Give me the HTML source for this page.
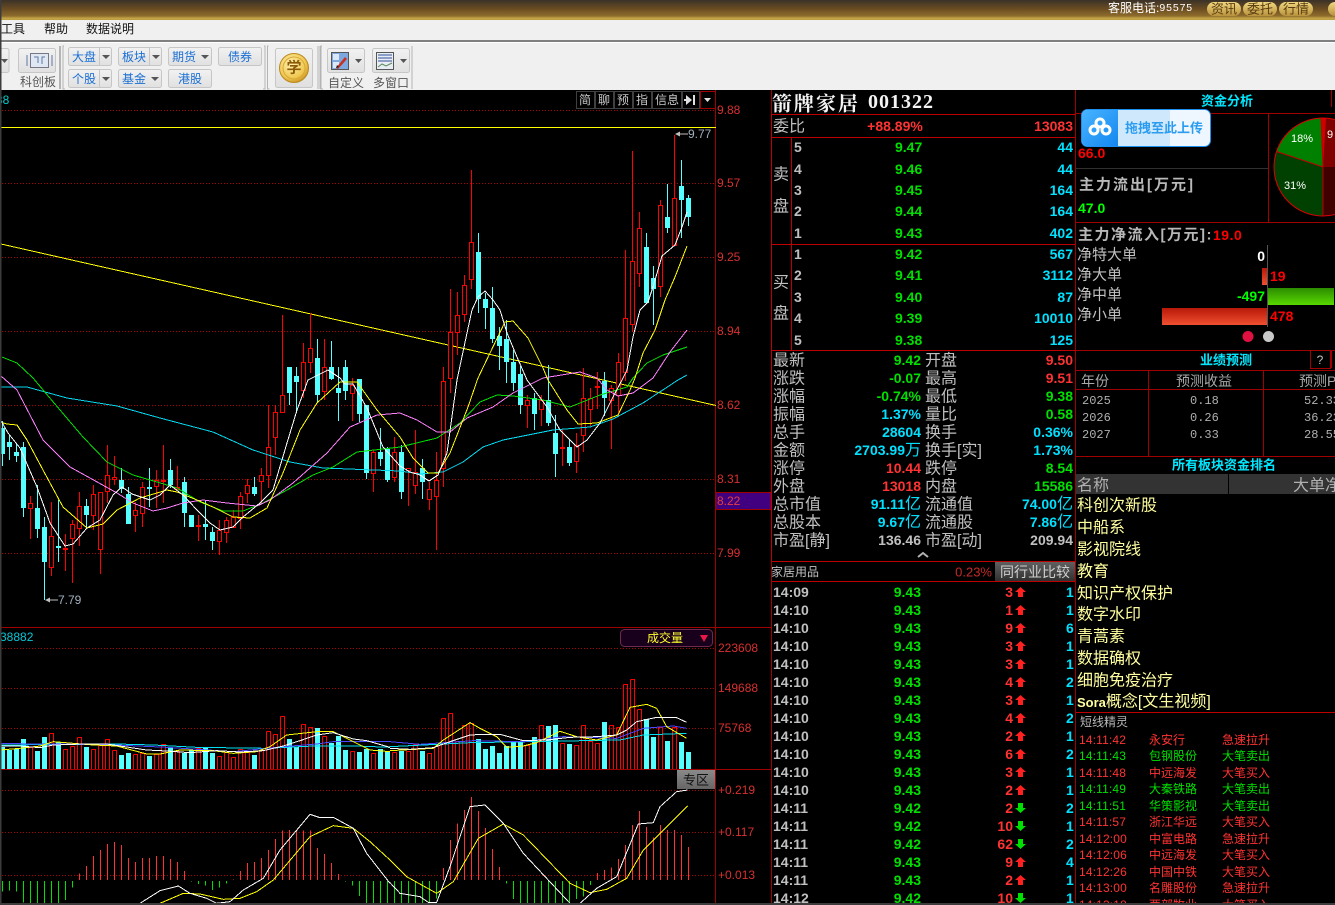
<!DOCTYPE html>
<html><head><meta charset="utf-8"><style>
html,body{margin:0;padding:0;background:#000;width:1335px;height:905px;overflow:hidden}
svg{display:block;position:absolute;left:0;top:0}
text{font-family:"Liberation Sans","WenQuanYi Zen Hei","Noto Sans CJK SC",sans-serif;dominant-baseline:central;white-space:pre}
.l{font-size:16px;fill:#c0c0c0;transform:translateY(1px)}
.f{font-size:15px}
.n{font-size:14px;font-weight:bold}
.a{font-size:12px;fill:#d83030}
.m{font-size:12px}
.e{text-anchor:end}
.ct{text-anchor:middle}
.r{fill:#ff3333}.g{fill:#00e000}.c{fill:#00e0ff}.w{fill:#c0c0c0}.y{fill:#ffffa0}
.cj{font-size:16px;font-weight:normal}
.h{font-size:13px;font-weight:bold;fill:#00e8ff;text-anchor:middle}
.b{font-size:12px;fill:#1a6fd4;text-anchor:middle}
.k{font-size:12px;fill:#555;text-anchor:middle}
.mo{font-family:"Liberation Mono",monospace;font-size:12px;fill:#b0b0b0;transform:translateY(1px)}
.t{font-size:12px;letter-spacing:.15px}
.ln{fill:none;stroke-width:1;shape-rendering:crispEdges}
.ns{vector-effect:non-scaling-stroke;fill:none;stroke-width:1;shape-rendering:crispEdges}
</style></head><body>
<svg width="1335" height="905" viewBox="0 0 1335 905" xmlns="http://www.w3.org/2000/svg">
<defs>
<linearGradient id="ban" x1="0" y1="0" x2="0" y2="1"><stop offset="0" stop-color="#3a3228"/><stop offset=".45" stop-color="#6a4c22"/><stop offset=".8" stop-color="#8e6c2c"/><stop offset=".92" stop-color="#c8a848"/><stop offset="1" stop-color="#b89a40"/></linearGradient>
<linearGradient id="pill" x1="0" y1="0" x2="0" y2="1"><stop offset="0" stop-color="#f0d880"/><stop offset="1" stop-color="#b8923c"/></linearGradient>
<linearGradient id="bt" x1="0" y1="0" x2="0" y2="1"><stop offset="0" stop-color="#f2f2f2"/><stop offset="1" stop-color="#e0e0e0"/></linearGradient>
<linearGradient id="rb" x1="0" y1="0" x2="0" y2="1"><stop offset="0" stop-color="#b81808"/><stop offset="1" stop-color="#f05030"/></linearGradient>
<linearGradient id="gb" x1="0" y1="0" x2="0" y2="1"><stop offset="0" stop-color="#2c8c00"/><stop offset="1" stop-color="#58d800"/></linearGradient>
<linearGradient id="gr" x1="0" y1="0" x2="0" y2="1"><stop offset="0" stop-color="#606060"/><stop offset="1" stop-color="#303030"/></linearGradient>
<linearGradient id="zq" x1="0" y1="0" x2="0" y2="1"><stop offset="0" stop-color="#8a8a8a"/><stop offset="1" stop-color="#666"/></linearGradient>
<radialGradient id="coin" cx=".4" cy=".35" r=".7"><stop offset="0" stop-color="#fff0b0"/><stop offset=".7" stop-color="#f0c850"/><stop offset="1" stop-color="#c89020"/></radialGradient>
<linearGradient id="blu" x1="0" y1="0" x2="1" y2="1"><stop offset="0" stop-color="#48b4ff"/><stop offset="1" stop-color="#1486f0"/></linearGradient>
<path id="u" d="M1020.5 587l5.5 5h-3v5h-5v-5h-3z" fill="#ff2020"/>
<path id="d" d="M1020.5 597l5.5-5h-3v-5h-5v5h-3z" fill="#00e000"/>
</defs>

<!-- top chrome -->
<rect width="1335" height="90" fill="#f0f0f0"/>
<rect width="1335" height="20" fill="url(#ban)"/>
<rect y="40" width="1335" height="2" fill="#808080"/>
<rect y="42" width="1335" height="1" fill="#fff"/>
<text x="1108" y="8" style="font-size:12px;fill:#fff">客服电话:<tspan style="font-size:10.5px;letter-spacing:.9px">95575</tspan></text>
<g fill="url(#pill)"><rect x="1207" y="2" width="34" height="14" rx="7"/><rect x="1243" y="2" width="34" height="14" rx="7"/><rect x="1279" y="2" width="34" height="14" rx="7"/><rect x="1328" y="2" width="20" height="14" rx="7"/></g>
<g style="font-size:13px;fill:#5a3c10;text-anchor:middle"><text x="1224" y="9">资讯</text><text x="1260" y="9">委托</text><text x="1296" y="9">行情</text></g>
<g style="font-size:12px;fill:#111"><text x="1" y="29">工具</text><text x="44" y="29">帮助</text><text x="86" y="29">数据说明</text></g>

<!-- toolbar -->
<g fill="url(#bt)" stroke="#c6c6c6">
<rect x="-6" y="48.5" width="15" height="24" rx="2"/><rect x="18.5" y="48.5" width="37" height="24" rx="2"/>
<rect x="68.5" y="47.5" width="43" height="18" rx="2"/><rect x="118.5" y="47.5" width="43" height="18" rx="2"/><rect x="168.5" y="47.5" width="43" height="18" rx="2"/><rect x="218.5" y="47.5" width="43" height="18" rx="2"/>
<rect x="68.5" y="69.5" width="43" height="18" rx="2"/><rect x="118.5" y="69.5" width="43" height="18" rx="2"/><rect x="168.5" y="69.5" width="43" height="18" rx="2"/>
<rect x="275.5" y="48.5" width="37" height="39" rx="2"/>
<rect x="327.5" y="48.5" width="37" height="24" rx="2"/><rect x="372.5" y="48.5" width="37" height="24" rx="2"/>
</g>
<path d="M99.5 48V65M149.5 48V65M99.5 70V87" stroke="#c6c6c6"/>
<g fill="#555"><path d="M1 59h7l-3.500 4zM102 55h8l-4 4zM152 55h8l-4 4zM201 55h8l-4 4zM102 77h8l-4 4zM151 77h8l-4 4zM355 59h7l-3.500 4zM400 59h7l-3.500 4z"/></g>
<g><text class="b" x="84" y="57">大盘</text><text class="b" x="134" y="57">板块</text><text class="b" x="184" y="57">期货</text><text class="b" x="240" y="57">债券</text><text class="b" x="84" y="79">个股</text><text class="b" x="134" y="79">基金</text><text class="b" x="190" y="79">港股</text></g>
<g stroke="#b4b4b4" fill="none"><path d="M59.500 46V89M60.500 46V89M64 46h-1V89h2M264 46h1V89h-2M268.500 46h-1V89h2M318 46V89M320 46V89M322 46h-1V89h2M412 46V89"/></g>
<!-- chip icon -->
<rect x="30.500" y="53.500" width="18" height="14" fill="#dfe7f2" stroke="#778"/>
<path d="M34 57h4v6M45 57h-3v7M27 55v11M52 55v11" stroke="#5a78a8" fill="none"/>
<text class="k" x="38" y="82">科创板</text>
<!-- coin -->
<circle cx="294" cy="68" r="14.500" fill="url(#coin)" stroke="#b88a20"/>
<circle cx="294" cy="68" r="11" fill="none" stroke="#d8a838"/>
<text x="294" y="68" style="font-size:15px;font-weight:bold;fill:#8a5a08;text-anchor:middle">学</text>
<!-- custom icons -->
<rect x="331.500" y="52.500" width="17" height="17" fill="#7ea8e0" stroke="#555"/>
<rect x="333" y="54" width="6" height="6" fill="#dde8f6"/><rect x="333" y="62" width="6" height="6" fill="#dde8f6"/>
<path d="M336 68l9-11 2 2-9 10z" fill="#c83020"/><path d="M336 68l1-3 2 2z" fill="#222"/>
<rect x="376.500" y="52.500" width="17" height="17" fill="#e8ecf4" stroke="#555"/>
<path d="M378 55h14M378 58h14M378 61h14" stroke="#30509a"/><path d="M378 67l4-3 4 2 6-3" stroke="#5a8a5a" fill="none"/>
<text class="k" x="346" y="83">自定义</text><text class="k" x="391" y="83">多窗口</text>

<!-- main black -->
<rect y="90" width="1335" height="815" fill="#000"/>

<!-- chart grid -->
<g stroke="#b00000" stroke-dasharray="1 2" shape-rendering="crispEdges">
<path d="M2 110.500H715M2 183.500H715M2 257.500H715M2 331.500H715M2 405.500H715M2 479.500H715M2 553.500H715M2 648.500H715M2 688.500H715M2 728.500H715M2 790.500H715M2 832.500H715M2 875.500H715"/>
</g>
<path class="ln" d="M0 627.500H771M0 769.500H771M715.500 90V905M771.500 90V905" stroke="#a00000"/>
<path class="ln" d="M1 127.500H716" stroke="#ffff00"/>
<path class="ln" d="M1 244L716 405.500" stroke="#ffff00"/>

<!-- axis labels -->
<g class="a">
<text class="a" x="717" y="110">9.88</text><text class="a" x="717" y="183">9.57</text><text class="a" x="717" y="257">9.25</text><text class="a" x="717" y="331">8.94</text><text class="a" x="717" y="405">8.62</text><text class="a" x="717" y="479">8.31</text><text class="a" x="717" y="553">7.99</text>
<text class="a" x="718" y="648">223608</text><text class="a" x="718" y="688">149688</text><text class="a" x="718" y="728">75768</text>
<text class="a" x="718" y="790">+0.219</text><text class="a" x="718" y="832">+0.117</text><text class="a" x="718" y="875">+0.013</text>
</g>
<rect x="716" y="492.500" width="55" height="17" fill="#400080" stroke="#a00000"/>
<text class="a" x="717" y="501" style="fill:#e04040">8.22</text>

<!-- candles: wicks -->
<path class="ln" stroke="#55ffff" d="M2.500 421V466M9.500 435V460M16.500 443V462M23.500 442V517M37.500 485V538M44.500 517V600M58.500 500V562M86.500 499V528M121.500 468V493M128.500 487V524M149.500 468V507M170.500 459V488M184.500 477V527M205.500 500V540M212.500 527V550M254.500 477V496M289.500 367V405M296.500 367V413M317.500 339V402M331.500 341V380M338.500 367V421M345.500 360V400M359.500 379V422M366.500 405V479M380.500 428V466M387.500 447V482M401.500 445V499M422.500 459V499M478.500 233V313M485.500 293V329M492.500 287V343M499.500 327V370M506.500 320V383M513.500 350V391M520.500 366V414M534.500 393V430M548.500 365V426M555.500 415V477M569.500 440V466M604.500 372V416M646.500 233V303M653.500 266V325M667.500 184V233M681.500 160V238M688.500 195V226"/>
<path fill="none" stroke="#55ffff" stroke-width="5" shape-rendering="crispEdges" d="M2.500 428V454M9.500 442V447M16.500 452V456M23.500 447V508M37.500 508V529M44.500 527V562M58.500 546V548M86.500 506V515M121.500 480V489M128.500 494V524M149.500 487V489M170.500 470V485M184.500 482V513M191.500 515V527M205.500 524V527M212.500 532V541M254.500 487V494M289.500 367V393M296.500 376V382M317.500 358V395M331.500 367V379M338.500 388V393M345.500 367V391M359.500 379V414M366.500 405V473M380.500 452V459M387.500 449V480M401.500 452V492M422.500 468V482M478.500 252V299M485.500 299V308M492.500 308V339M499.500 336V346M506.500 339V362M513.500 362V383M520.500 374V405M534.500 398V414M548.500 400V423M555.500 433V454M569.500 447V463M604.500 381V398M646.500 247V303M653.500 278V289M667.500 217V228M681.500 186V200M688.500 198V217"/>
<path class="ln" stroke="#ff0000" d="M30.500 496V539M51.500 502V576M65.500 534V571M72.500 520V583M79.500 492V546M93.500 485V530M100.500 492V574M107.500 445V503M114.500 456V485M135.500 502V532M142.500 482V527M156.500 470V508M163.500 445V503M177.500 466V490M198.500 515V541M219.500 520V555M226.500 517V543M233.500 510V527M240.500 492V529M247.500 479V503M261.500 468V503M268.500 405V488M275.500 405V455M282.500 315V413M303.500 343V398M310.500 313V373M324.500 339V400M352.500 378V421M373.500 450V492M394.500 437V482M408.500 468V506M415.500 430V494M429.500 482V510M436.500 452V550M443.500 367V487M450.500 289V393M457.500 292V355M464.500 275V322M471.500 170V289M527.500 395V428M541.500 395V426M562.500 429V466M576.500 433V473M583.500 368V452M590.500 388V426M597.500 372V409M611.500 385V449M618.500 353V417M625.500 250V381M632.500 151V332M639.500 212V287M660.500 200V297M674.500 135V245"/>
<path fill="#000" stroke="#ff0000" shape-rendering="crispEdges" d="M28.500 503.500h4V508.500h-4zM49.500 536.500h4V567.500h-4zM63.500 548.500h4V549.500h-4zM70.500 524.500h4V538.500h-4zM77.500 506.500h4V528.500h-4zM91.500 494.500h4V515.500h-4zM98.500 492.500h4V549.500h-4zM105.500 475.500h4V491.500h-4zM112.500 477.500h4V479.500h-4zM133.500 510.500h4V515.500h-4zM140.500 487.500h4V513.500h-4zM154.500 480.500h4V486.500h-4zM161.500 480.500h4V481.500h-4zM175.500 487.500h4V489.500h-4zM196.500 525.500h4V526.500h-4zM217.500 530.500h4V541.500h-4zM224.500 520.500h4V532.500h-4zM231.500 517.500h4V527.500h-4zM238.500 496.500h4V518.500h-4zM245.500 485.500h4V493.500h-4zM259.500 475.500h4V481.500h-4zM266.500 447.500h4V475.500h-4zM273.500 412.500h4V437.500h-4zM280.500 395.500h4V412.500h-4zM301.500 362.500h4V390.500h-4zM308.500 348.500h4V362.500h-4zM322.500 367.500h4V391.500h-4zM350.500 385.500h4V393.500h-4zM371.500 452.500h4V473.500h-4zM392.500 452.500h4V477.500h-4zM406.500 468.500h4V470.500h-4zM413.500 472.500h4V485.500h-4zM427.500 489.500h4V499.500h-4zM434.500 480.500h4V496.500h-4zM441.500 381.500h4V468.500h-4zM448.500 332.500h4V378.500h-4zM455.500 315.500h4V332.500h-4zM462.500 285.500h4V314.500h-4zM469.500 242.500h4V279.500h-4zM525.500 400.500h4V405.500h-4zM539.500 400.500h4V409.500h-4zM560.500 447.500h4V448.500h-4zM574.500 445.500h4V461.500h-4zM581.500 398.500h4V435.500h-4zM588.500 398.500h4V409.500h-4zM595.500 386.500h4V387.500h-4zM609.500 388.500h4V400.500h-4zM616.500 362.500h4V395.500h-4zM623.500 318.500h4V372.500h-4zM630.500 261.500h4V324.500h-4zM637.500 228.500h4V273.500h-4zM658.500 205.500h4V286.500h-4zM672.500 198.500h4V245.500h-4z"/>

<!-- moving averages -->
<polyline class="ln" stroke="#00d8f0" points="0,387 27,387 67,398 117,406 160,418 213,432 253,450 290,462 323,468 400,471 420,474 443,472 463,462 483,447 503,440 553,430 590,427 613,419 643,403 678,380 687,375"/>
<polyline class="ln" stroke="#00e000" points="2,357 17,363 33,378 60,410 83,437 107,462 133,475 157,482 177,488 200,502 223,511 243,511 263,503 287,490 313,475 333,467 357,452 400,447 437,438 460,423 480,402 497,395 513,396 543,400 570,407 600,395 627,387 633,378 647,363 663,355 687,347"/>
<polyline class="ln" stroke="#ff80ff" points="1,376 17,390 43,440 70,467 90,478 117,493 133,503 153,511 167,508 183,503 203,500 227,503 257,506 270,500 293,483 327,453 350,427 377,415 400,413 417,420 437,432 450,432 467,418 493,407 513,393 543,378 580,372 597,378 607,390 618,396 633,393 653,378 670,352 687,330"/>
<polyline class="ln" stroke="#ffff00" points="0,422 7,424 17,425 27,440 43,470 63,507 87,528 103,524 117,510 140,498 167,490 177,492 197,500 213,507 233,517 250,518 267,508 283,473 300,430 317,403 340,382 357,382 377,410 400,437 413,458 428,473 438,473 450,453 468,407 478,378 490,353 505,322 513,321 528,338 543,368 548,380 567,410 578,424 597,423 618,415 630,390 635,378 643,353 655,330 665,300 675,277 687,246"/>
<polyline class="ln" stroke="#fff" points="0,419 8,433 20,448 37,487 50,523 65,546 73,544 87,528 100,520 113,495 122,487 132,494 150,500 160,495 170,485 183,495 197,510 210,523 220,530 233,527 243,517 260,503 273,490 287,443 297,410 308,380 328,370 340,378 345,384 353,384 367,408 383,447 400,466 410,472 420,475 429,481 438,475 447,453 457,380 467,333 472,310 478,297 485,291 493,300 500,310 507,333 517,357 527,380 547,407 560,430 577,447 587,440 600,423 613,397 622,380 627,370 633,337 640,310 648,302 653,287 662,256 675,245 682,227 687,212"/>

<!-- high/low labels -->
<path d="M675 134l5-2.500v2h8v1h-8v2z" fill="#c0c0c0"/>
<text x="688" y="134" class="m" style="fill:#a0b0c0">9.77</text>
<path d="M45 600l5-2.500v2h8v1h-8v2z" fill="#c0c0c0"/>
<text x="58" y="600" class="m" style="fill:#a0b0c0">7.79</text>
<text x="-4" y="100" class="m" style="fill:#00d0d0">88</text>
<text x="0" y="637" class="m" style="fill:#00c8d8">38882</text>

<!-- volume bars -->
<path fill="none" stroke="#55ffff" stroke-width="5" shape-rendering="crispEdges" d="M2.500 747V769M9.500 750V769M16.500 749V769M23.500 739V769M37.500 751V769M44.500 737V769M58.500 742V769M86.500 747V769M121.500 755V769M128.500 753V769M149.500 756V769M170.500 748V769M184.500 753V769M191.500 750V769M205.500 748V769M212.500 753V769M254.500 755V769M289.500 739V769M296.500 747V769M317.500 728V769M331.500 743V769M338.500 736V769M345.500 750V769M359.500 752V769M366.500 749V769M380.500 749V769M387.500 752V769M401.500 751V769M422.500 751V769M478.500 739V769M485.500 749V769M492.500 746V769M499.500 753V769M506.500 746V769M513.500 742V769M520.500 741V769M534.500 737V769M548.500 726V769M555.500 725V769M569.500 744V769M604.500 722V769M646.500 719V769M653.500 737V769M667.500 741V769M681.500 742V769M688.500 752V769"/>
<path fill="none" stroke="#ff0000" shape-rendering="crispEdges" d="M28.500 747.500h4V769M28.500 747.500V769M49.500 733.500h4V769M49.500 733.500V769M63.500 749.500h4V769M63.500 749.500V769M70.500 746.500h4V769M70.500 746.500V769M77.500 737.500h4V769M77.500 737.500V769M91.500 749.500h4V769M91.500 749.500V769M98.500 745.500h4V769M98.500 745.500V769M105.500 739.500h4V769M105.500 739.500V769M112.500 750.500h4V769M112.500 750.500V769M133.500 754.500h4V769M133.500 754.500V769M140.500 753.500h4V769M140.500 753.500V769M154.500 754.500h4V769M154.500 754.500V769M161.500 744.500h4V769M161.500 744.500V769M175.500 751.500h4V769M175.500 751.500V769M196.500 748.500h4V769M196.500 748.500V769M217.500 756.500h4V769M217.500 756.500V769M224.500 752.500h4V769M224.500 752.500V769M231.500 757.500h4V769M231.500 757.500V769M238.500 749.500h4V769M238.500 749.500V769M245.500 752.500h4V769M245.500 752.500V769M259.500 750.500h4V769M259.500 750.500V769M266.500 731.500h4V769M266.500 731.500V769M273.500 734.500h4V769M273.500 734.500V769M280.500 716.500h4V769M280.500 716.500V769M301.500 724.500h4V769M301.500 724.500V769M308.500 727.500h4V769M308.500 727.500V769M322.500 736.500h4V769M322.500 736.500V769M350.500 751.500h4V769M350.500 751.500V769M371.500 753.500h4V769M371.500 753.500V769M392.500 752.500h4V769M392.500 752.500V769M406.500 751.500h4V769M406.500 751.500V769M413.500 744.500h4V769M413.500 744.500V769M427.500 753.500h4V769M427.500 753.500V769M434.500 746.500h4V769M434.500 746.500V769M441.500 718.500h4V769M441.500 718.500V769M448.500 713.500h4V769M448.500 713.500V769M455.500 741.500h4V769M455.500 741.500V769M462.500 725.500h4V769M462.500 725.500V769M469.500 723.500h4V769M469.500 723.500V769M525.500 745.500h4V769M525.500 745.500V769M539.500 725.500h4V769M539.500 725.500V769M560.500 743.500h4V769M560.500 743.500V769M574.500 745.500h4V769M574.500 745.500V769M581.500 725.500h4V769M581.500 725.500V769M588.500 741.500h4V769M588.500 741.500V769M595.500 743.500h4V769M595.500 743.500V769M609.500 725.500h4V769M609.500 725.500V769M616.500 727.500h4V769M616.500 727.500V769M623.500 684.500h4V769M623.500 684.500V769M630.500 679.500h4V769M630.500 679.500V769M637.500 709.500h4V769M637.500 709.500V769M658.500 727.500h4V769M658.500 727.500V769M672.500 727.500h4V769M672.500 727.500V769"/>

<!-- volume MA & MACD, left half -->
<g transform="translate(0,620) scale(.33333)">
<polyline class="ns" stroke="#00e0f0" points="0,375 350,372 460,375 590,382 800,385 940,378 1070,378 1170,382"/>
<polyline class="ns" stroke="#4848ff" points="0,370 100,372 200,372 350,375 500,382 700,395 850,380 950,372 1000,365 1170,365"/>
<polyline class="ns" stroke="#ffff00" points="0,390 60,385 120,378 160,365 280,375 350,378 440,402 480,402 540,390 640,392 700,400 770,395 810,380 860,345 950,335 1000,335 1060,365 1110,390 1170,395"/>
<polyline class="ns" stroke="#fff" points="0,378 60,378 120,383 160,375 250,372 320,372 360,378 440,390 500,393 570,398 650,392 720,396 790,392 850,378 900,362 950,345 1000,338 1060,357 1100,362 1170,382"/>
<path class="ns" stroke="#00e000" d="M7 783V815M28 783V812M49 783V815M70 783V848M91 783V850M112 783V850M133 783V850M154 783V850M175 783V850M196 783V840M217 783V803M574 783V785M595 783V792M616 783V797M637 783V810M658 783V803M679 783V790M1036 783V785M1057 783V797M1078 783V828M1099 783V850M1120 783V850M1141 783V850M1162 783V850"/>
<path class="ns" stroke="#ff3030" d="M238 780V760M259 780V738M280 780V708M301 780V690M322 780V672M343 780V666M364 780V675M385 780V714M406 780V726M427 780V714M448 780V714M469 780V708M490 780V708M511 780V717M532 780V726M553 780V753M700 780V778M721 780V753M742 780V729M763 780V726M784 780V714M805 780V690M826 780V657M847 780V632M868 780V630M889 780V632M910 780V632M931 780V632M952 780V684M973 780V702M994 780V729M1015 780V762"/>
<polyline class="ns" stroke="#ffff00" points="480,850 550,820 600,822 670,838 720,835 770,815 820,780 930,650 1000,617 1060,625 1110,665 1170,720"/>
<polyline class="ns" stroke="#fff" points="420,850 480,812 535,798 570,820 620,835 650,850 690,845 730,810 790,775 840,690 930,583 960,593 1000,592 1060,625 1100,700 1170,790"/>
</g>
<!-- right half -->
<g transform="translate(390,620) scale(.33333)">
<polyline class="ns" stroke="#00e0f0" points="0,380 240,368 420,365 690,360 760,345 890,340"/>
<polyline class="ns" stroke="#4848ff" points="0,365 90,373 250,362 400,365 520,350 680,355 760,325 850,318 890,325"/>
<polyline class="ns" stroke="#ffff00" points="0,392 130,385 160,360 240,308 270,325 320,350 350,382 400,378 440,368 510,334 560,350 620,360 680,345 720,262 770,253 800,265 830,320 890,355"/>
<polyline class="ns" stroke="#fff" points="0,385 60,388 130,383 180,365 240,345 280,343 330,343 400,362 470,360 540,352 620,350 680,345 710,330 740,305 800,292 860,293 890,307"/>
<path class="ns" stroke="#00e000" d="M13 783V850M34 783V850M55 783V850M76 783V850M97 783V850M118 783V850M139 783V835M349 783V790M370 783V837M391 783V850M412 783V850M433 783V850M454 783V850M475 783V850M496 783V850M517 783V850M538 783V850M559 783V837M580 783V830M601 783V795"/>
<path class="ns" stroke="#ff3030" d="M160 780V744M181 780V660M202 780V610M223 780V570M244 780V531M265 780V573M286 780V624M307 780V687M328 780V741M622 780V759M643 780V750M664 780V742M685 780V717M706 780V675M727 780V615M748 780V573M769 780V621M790 780V652M811 780V615M832 780V630M853 780V630M874 780V645M895 780V681"/>
<polyline class="ns" stroke="#ffff00" points="0,720 50,770 140,820 190,785 265,655 340,612 400,645 540,790 600,818 650,808 710,775 760,690 830,620 893,558"/>
<polyline class="ns" stroke="#fff" points="0,788 30,820 90,830 115,847 140,847 180,740 240,560 285,555 340,610 400,700 470,775 540,850 570,850 620,805 680,770 745,612 790,608 810,560 860,515 893,510"/>
</g>

<!-- volume selector & special button -->
<rect x="620.500" y="629.500" width="92" height="17" rx="4" fill="#18001c" stroke="#702850"/>
<text x="665" y="638" style="font-size:12px;fill:#ffff30;text-anchor:middle">成交量</text>
<path d="M700 635h8l-4 7z" fill="#e81848"/>
<rect x="677" y="770" width="38" height="19" fill="url(#zq)"/>
<text x="696" y="780" style="font-size:13px;fill:#111;text-anchor:middle">专区</text>

<!-- chart top buttons -->
<g fill="#000" stroke="#404040"><rect x="576.500" y="91.500" width="18" height="17"/><rect x="595.500" y="91.500" width="18" height="17"/><rect x="614.500" y="91.500" width="18" height="17"/><rect x="633.500" y="91.500" width="18" height="17"/><rect x="652.500" y="91.500" width="29" height="17"/><rect x="682.500" y="91.500" width="17" height="17"/></g>
<rect x="700.500" y="91.500" width="15" height="17" fill="#000" stroke="#a00000"/>
<g style="font-size:12px;fill:#c8c8c8;text-anchor:middle"><text x="585" y="100">简</text><text x="604" y="100">聊</text><text x="623" y="100">预</text><text x="642" y="100">指</text><text x="667" y="100">信息</text></g>
<path d="M686 95l6 5-6 5zM693 95h2V105h-2z" fill="#e0e0e0"/><path d="M684 99h3v2h-3z" fill="#e0e0e0"/>
<path d="M704 98h7l-3.500 4z" fill="#e0e0e0"/>

<!-- quote panel -->
<text x="772" y="102" style="font-family:'Noto Serif CJK SC','Liberation Serif',serif;font-size:20px;font-weight:bold;fill:#f4f4f4;letter-spacing:2px">箭牌家居</text>
<text x="868" y="102" style="font-family:'Liberation Serif',serif;font-size:20px;font-weight:bold;fill:#f4f4f4;letter-spacing:1px">001322</text>
<path class="ln" stroke="#c00000" d="M771.500 114.500H1075.500V561.500H771.500ZM771.500 137.500H1075.500M771.500 244.500H1075.500M771.500 350.500H1075.500M791.500 137.500V350.500M771.500 581.500H1075.500M1075.500 90V905"/>
<text class="l" x="773" y="126">委比</text>
<text class="n r ct" x="895" y="126">+88.89%</text><text class="n r e" x="1073" y="126">13083</text>
<text class="l" x="773" y="174">卖</text><text class="l" x="773" y="206">盘</text><text class="l" x="773" y="282">买</text><text class="l" x="773" y="313">盘</text>
<g class="n w"><text class="n w" x="794" y="147">5</text><text class="n w" x="794" y="169">4</text><text class="n w" x="794" y="190">3</text><text class="n w" x="794" y="211">2</text><text class="n w" x="794" y="233">1</text><text class="n w" x="794" y="254">1</text><text class="n w" x="794" y="275">2</text><text class="n w" x="794" y="297">3</text><text class="n w" x="794" y="318">4</text><text class="n w" x="794" y="340">5</text></g>
<text class="n g" x="895" y="147">9.47</text><text class="n g" x="895" y="169">9.46</text><text class="n g" x="895" y="190">9.45</text><text class="n g" x="895" y="211">9.44</text><text class="n g" x="895" y="233">9.43</text><text class="n g" x="895" y="254">9.42</text><text class="n g" x="895" y="275">9.41</text><text class="n g" x="895" y="297">9.40</text><text class="n g" x="895" y="318">9.39</text><text class="n g" x="895" y="340">9.38</text>
<text class="n c e" x="1073" y="147">44</text><text class="n c e" x="1073" y="169">44</text><text class="n c e" x="1073" y="190">164</text><text class="n c e" x="1073" y="211">164</text><text class="n c e" x="1073" y="233">402</text><text class="n c e" x="1073" y="254">567</text><text class="n c e" x="1073" y="275">3112</text><text class="n c e" x="1073" y="297">87</text><text class="n c e" x="1073" y="318">10010</text><text class="n c e" x="1073" y="340">125</text>

<text class="l" x="773" y="360">最新</text><text class="n g e" x="921" y="360">9.42</text><text class="l" x="925" y="360">开盘</text><text class="n r e" x="1073" y="360">9.50</text>
<text class="l" x="773" y="378">涨跌</text><text class="n g e" x="921" y="378">-0.07</text><text class="l" x="925" y="378">最高</text><text class="n r e" x="1073" y="378">9.51</text>
<text class="l" x="773" y="396">涨幅</text><text class="n g e" x="921" y="396">-0.74%</text><text class="l" x="925" y="396">最低</text><text class="n g e" x="1073" y="396">9.38</text>
<text class="l" x="773" y="414">振幅</text><text class="n c e" x="921" y="414">1.37%</text><text class="l" x="925" y="414">量比</text><text class="n g e" x="1073" y="414">0.58</text>
<text class="l" x="773" y="432">总手</text><text class="n c e" x="921" y="432">28604</text><text class="l" x="925" y="432">换手</text><text class="n c e" x="1073" y="432">0.36%</text>
<text class="l" x="773" y="450">金额</text><text class="n c e" x="921" y="450">2703.99<tspan class="cj">万</tspan></text><text class="l" x="925" y="450">换手[实]</text><text class="n c e" x="1073" y="450">1.73%</text>
<text class="l" x="773" y="468">涨停</text><text class="n r e" x="921" y="468">10.44</text><text class="l" x="925" y="468">跌停</text><text class="n g e" x="1073" y="468">8.54</text>
<text class="l" x="773" y="486">外盘</text><text class="n r e" x="921" y="486">13018</text><text class="l" x="925" y="486">内盘</text><text class="n g e" x="1073" y="486">15586</text>
<text class="l" x="773" y="504">总市值</text><text class="n c e" x="921" y="504">91.11<tspan class="cj">亿</tspan></text><text class="l" x="925" y="504">流通值</text><text class="n c e" x="1073" y="504">74.00<tspan class="cj">亿</tspan></text>
<text class="l" x="773" y="522">总股本</text><text class="n c e" x="921" y="522">9.67<tspan class="cj">亿</tspan></text><text class="l" x="925" y="522">流通股</text><text class="n c e" x="1073" y="522">7.86<tspan class="cj">亿</tspan></text>
<text class="l" x="773" y="540">市盈[静]</text><text class="n w e" x="921" y="540">136.46</text><text class="l" x="925" y="540">市盈[动]</text><text class="n w e" x="1073" y="540">209.94</text>
<path d="M918 557l5-4 5 4" fill="none" stroke="#b0b0b0" stroke-width="2"/>
<text x="771" y="572" style="font-size:12px;fill:#c0c0c0">家居用品</text>
<text x="992" y="572" class="e" style="font-size:13px;fill:#c82828">0.23%</text>
<rect x="995" y="562" width="80" height="19" fill="url(#gr)"/>
<text x="1035" y="572" style="font-size:14px;fill:#d0d0d0;text-anchor:middle">同行业比较</text>

<!-- ticks -->
<g class="n w">
<text class="n w" x="773" y="592">14:09</text><text class="n w" x="773" y="610">14:10</text><text class="n w" x="773" y="628">14:10</text><text class="n w" x="773" y="646">14:10</text><text class="n w" x="773" y="664">14:10</text><text class="n w" x="773" y="682">14:10</text><text class="n w" x="773" y="700">14:10</text><text class="n w" x="773" y="718">14:10</text><text class="n w" x="773" y="736">14:10</text><text class="n w" x="773" y="754">14:10</text><text class="n w" x="773" y="772">14:10</text><text class="n w" x="773" y="790">14:10</text><text class="n w" x="773" y="808">14:11</text><text class="n w" x="773" y="826">14:11</text><text class="n w" x="773" y="844">14:11</text><text class="n w" x="773" y="862">14:11</text><text class="n w" x="773" y="880">14:11</text><text class="n w" x="773" y="898">14:12</text>
</g>
<text class="n g e" x="921" y="592">9.43</text><text class="n g e" x="921" y="610">9.43</text><text class="n g e" x="921" y="628">9.43</text><text class="n g e" x="921" y="646">9.43</text><text class="n g e" x="921" y="664">9.43</text><text class="n g e" x="921" y="682">9.43</text><text class="n g e" x="921" y="700">9.43</text><text class="n g e" x="921" y="718">9.43</text><text class="n g e" x="921" y="736">9.43</text><text class="n g e" x="921" y="754">9.43</text><text class="n g e" x="921" y="772">9.43</text><text class="n g e" x="921" y="790">9.43</text><text class="n g e" x="921" y="808">9.42</text><text class="n g e" x="921" y="826">9.42</text><text class="n g e" x="921" y="844">9.42</text><text class="n g e" x="921" y="862">9.43</text><text class="n g e" x="921" y="880">9.43</text><text class="n g e" x="921" y="898">9.42</text>
<text class="n r e" x="1013" y="592">3</text><text class="n r e" x="1013" y="610">1</text><text class="n r e" x="1013" y="628">9</text><text class="n r e" x="1013" y="646">3</text><text class="n r e" x="1013" y="664">3</text><text class="n r e" x="1013" y="682">4</text><text class="n r e" x="1013" y="700">3</text><text class="n r e" x="1013" y="718">4</text><text class="n r e" x="1013" y="736">2</text><text class="n r e" x="1013" y="754">6</text><text class="n r e" x="1013" y="772">3</text><text class="n r e" x="1013" y="790">2</text><text class="n r e" x="1013" y="808">2</text><text class="n r e" x="1013" y="826">10</text><text class="n r e" x="1013" y="844">62</text><text class="n r e" x="1013" y="862">9</text><text class="n r e" x="1013" y="880">2</text><text class="n r e" x="1013" y="898">10</text>
<use href="#u"/><use href="#u" y="18"/><use href="#u" y="36"/><use href="#u" y="54"/><use href="#u" y="72"/><use href="#u" y="90"/><use href="#u" y="108"/><use href="#u" y="126"/><use href="#u" y="144"/><use href="#u" y="162"/><use href="#u" y="180"/><use href="#u" y="198"/><use href="#d" y="216"/><use href="#d" y="234"/><use href="#d" y="252"/><use href="#u" y="270"/><use href="#u" y="288"/><use href="#d" y="306"/>
<text class="n c" x="1066" y="592">1</text><text class="n c" x="1066" y="610">1</text><text class="n c" x="1066" y="628">6</text><text class="n c" x="1066" y="646">1</text><text class="n c" x="1066" y="664">1</text><text class="n c" x="1066" y="682">2</text><text class="n c" x="1066" y="700">1</text><text class="n c" x="1066" y="718">2</text><text class="n c" x="1066" y="736">1</text><text class="n c" x="1066" y="754">2</text><text class="n c" x="1066" y="772">1</text><text class="n c" x="1066" y="790">1</text><text class="n c" x="1066" y="808">2</text><text class="n c" x="1066" y="826">1</text><text class="n c" x="1066" y="844">2</text><text class="n c" x="1066" y="862">4</text><text class="n c" x="1066" y="880">1</text><text class="n c" x="1066" y="898">1</text>

<!-- right column -->
<rect x="1076" y="90" width="259" height="815" fill="#000"/>
<path class="ln" stroke="#a00000" d="M1075.500 90V905M1076 113.500H1335M1331.500 90V107M1268.500 113.500V222.500M1076 222.500H1335"/>
<path class="ln" stroke="#303030" d="M1076 168.500H1268"/>
<text class="h" x="1227" y="101">资金分析</text>

<text class="n" x="1078" y="153" style="fill:#ff0000">66.0</text>
<text x="1079" y="185" style="font-size:15px;font-weight:bold;fill:#b8b8b8;letter-spacing:2px">主力流出[万元]</text>
<text class="n" x="1078" y="208" style="fill:#00ff00">47.0</text>
<text x="1078" y="235" style="font-size:15px;font-weight:bold;fill:#b8b8b8;letter-spacing:1.500px">主力净流入[万元]:<tspan class="n" style="fill:#ff0000;letter-spacing:.5px">19.0</tspan></text>

<!-- pie -->
<path d="M1323 167L1321 118A49 49 0 0 1 1372 167Z" fill="#800000"/>
<path d="M1323 167V216A49 49 0 0 0 1372 167Z" fill="#400000"/>
<path d="M1323 167V216A49 49 0 0 1 1276.500 151.500Z" fill="#004000"/>
<path d="M1323 167L1276.500 151.500A49 49 0 0 1 1321 118Z" fill="#008000"/>
<path d="M1323 167L1321 118A49 49 0 0 1 1326 118.100Z" fill="#d00000"/>
<circle cx="1323" cy="167" r="49" fill="none" stroke="#e00000"/>
<path d="M1323 167L1276.500 151.500M1323 167V216M1323 167L1321 118" stroke="#c00000" fill="none"/>
<text x="1302" y="139" style="font-size:11px;fill:#fff;text-anchor:middle">18%</text>
<text x="1295" y="186" style="font-size:11px;fill:#fff;text-anchor:middle">31%</text>
<text x="1327" y="135" style="font-size:11px;fill:#fff">9</text>

<!-- popup -->
<rect x="1081.500" y="109.500" width="129" height="37" rx="6" fill="#eef7ff" stroke="#1e90f0"/>
<path d="M1118 110H1170V146H1118Z" fill="#cfe8fc"/>
<path d="M1087.500 110H1118V146H1087.500A5.500 5.500 0 0 1 1082 140.500V115.500A5.500 5.500 0 0 1 1087.500 110Z" fill="url(#blu)"/>
<g fill="none" stroke="#fff" stroke-width="3"><circle cx="1094" cy="130" r="4"/><circle cx="1106" cy="130" r="4"/><circle cx="1100" cy="123" r="4"/></g>
<text x="1164" y="128" style="font-size:13px;font-weight:bold;fill:#2a9cf0;text-anchor:middle">拖拽至此上传</text>

<!-- net flows -->
<text class="l f" x="1077" y="254">净特大单</text><text class="l f" x="1077" y="274">净大单</text><text class="l f" x="1077" y="294">净中单</text><text class="l f" x="1077" y="314">净小单</text>
<rect x="1262" y="268" width="5" height="17" fill="url(#rb)"/>
<rect x="1267" y="288" width="67" height="17" fill="url(#gb)"/>
<rect x="1162" y="308" width="105" height="17" fill="url(#rb)"/>
<path class="ln" stroke="#555" d="M1267.500 245V327"/>
<text class="n e" x="1265" y="256" style="fill:#fff">0</text>
<text class="n" x="1270" y="276" style="fill:#ff0000">19</text>
<text class="n e" x="1265" y="296" style="fill:#00ff00">-497</text>
<text class="n" x="1270" y="316" style="fill:#ff0000">478</text>
<circle cx="1248" cy="336.500" r="5.500" fill="#e01040"/><circle cx="1268.500" cy="336.500" r="5.500" fill="#c8c8c8"/>

<!-- forecast -->
<path class="ln" stroke="#a00000" d="M1076 350.500H1335M1076 370.500H1335M1076 389.500H1335M1076 456.500H1335M1148.500 370V456M1263.500 370V456M1310.500 351V368.500H1330.500V351M1331.500 351V368"/>
<text class="h" x="1226" y="360">业绩预测</text>
<text x="1320" y="360" style="font-size:12px;fill:#c0c0c0;text-anchor:middle">?</text>
<text class="l" x="1081" y="380" style="font-size:14px;fill:#a8a8a8">年份</text><text class="l" x="1176" y="380" style="font-size:14px;fill:#a8a8a8">预测收益</text><text class="l" x="1299" y="380" style="font-size:14px;fill:#a8a8a8">预测PE</text>
<text class="mo" x="1082" y="400">2025</text><text class="mo" x="1190" y="400">0.18</text><text class="mo" x="1304" y="400">52.33</text>
<text class="mo" x="1082" y="417">2026</text><text class="mo" x="1190" y="417">0.26</text><text class="mo" x="1304" y="417">36.23</text>
<text class="mo" x="1082" y="434">2027</text><text class="mo" x="1190" y="434">0.33</text><text class="mo" x="1304" y="434">28.55</text>

<!-- sector ranks -->
<text class="h" x="1224" y="465">所有板块资金排名</text>
<rect x="1076" y="474" width="259" height="20" fill="#333"/>
<rect x="1228" y="474" width="1" height="20" fill="#000"/>
<text class="l" x="1077" y="485" style="fill:#b0b0b0">名称</text><text class="l" x="1293" y="485" style="fill:#b0b0b0">大单净</text>
<text class="l y" x="1077" y="505">科创次新股</text><text class="l y" x="1077" y="527">中船系</text><text class="l y" x="1077" y="549">影视院线</text><text class="l y" x="1077" y="571">教育</text><text class="l y" x="1077" y="593">知识产权保护</text><text class="l y" x="1077" y="614">数字水印</text><text class="l y" x="1077" y="636">青蒿素</text><text class="l y" x="1077" y="658">数据确权</text><text class="l y" x="1077" y="680">细胞免疫治疗</text>
<text class="l y" x="1077" y="701"><tspan style="font-size:13px;font-weight:bold">Sora</tspan>概念[文生视频]</text>
<path class="ln" stroke="#c00000" d="M1076 712.500H1335"/>
<text x="1080" y="722" style="font-size:12px;fill:#b8b8b8">短线精灵</text>
<g style="font-size:12px">
<text class="t r" x="1079" y="740">14:11:42</text><text class="r" x="1149" y="740">永安行</text><text class="r" x="1222" y="740">急速拉升</text>
<text class="t g" x="1079" y="756">14:11:43</text><text class="g" x="1149" y="756">包钢股份</text><text class="g" x="1222" y="756">大笔卖出</text>
<text class="t r" x="1079" y="773">14:11:48</text><text class="r" x="1149" y="773">中远海发</text><text class="r" x="1222" y="773">大笔买入</text>
<text class="t g" x="1079" y="789">14:11:49</text><text class="g" x="1149" y="789">大秦铁路</text><text class="g" x="1222" y="789">大笔卖出</text>
<text class="t g" x="1079" y="806">14:11:51</text><text class="g" x="1149" y="806">华策影视</text><text class="g" x="1222" y="806">大笔卖出</text>
<text class="t r" x="1079" y="822">14:11:57</text><text class="r" x="1149" y="822">浙江华远</text><text class="r" x="1222" y="822">大笔买入</text>
<text class="t r" x="1079" y="839">14:12:00</text><text class="r" x="1149" y="839">中富电路</text><text class="r" x="1222" y="839">急速拉升</text>
<text class="t r" x="1079" y="855">14:12:06</text><text class="r" x="1149" y="855">中远海发</text><text class="r" x="1222" y="855">大笔买入</text>
<text class="t r" x="1079" y="872">14:12:26</text><text class="r" x="1149" y="872">中国中铁</text><text class="r" x="1222" y="872">大笔买入</text>
<text class="t r" x="1079" y="888">14:13:00</text><text class="r" x="1149" y="888">名雕股份</text><text class="r" x="1222" y="888">急速拉升</text>
<text class="t r" x="1079" y="905">14:13:18</text><text class="r" x="1149" y="905">西部牧业</text><text class="r" x="1222" y="905">大笔买入</text>
</g>

<!-- window edges -->
<rect x="0" y="0" width="1.500" height="905" fill="#3c3c3c"/>
<rect x="0" y="903" width="1335" height="2" fill="#3c3c3c"/>
</svg>
</body></html>
